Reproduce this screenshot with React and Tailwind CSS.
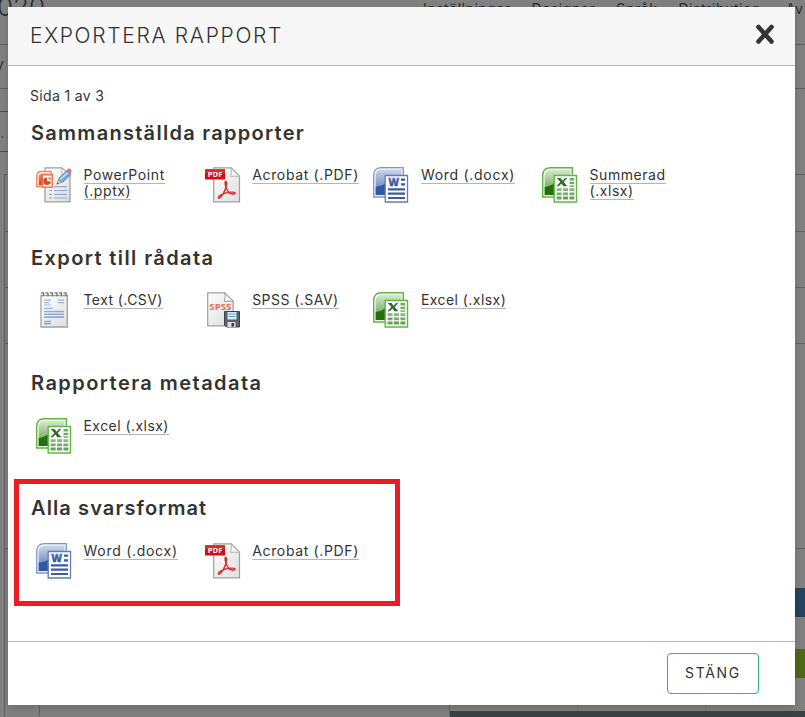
const PowerPointIcon = () => (
  <svg width="36" height="36" viewBox="0 0 36 36">
    <defs>
      <linearGradient id="ppt-page" x1="0" y1="0" x2="1" y2="1">
        <stop offset="0" stopColor="#ffffff" />
        <stop offset="1" stopColor="#dcdcdc" />
      </linearGradient>
      <linearGradient id="ppt-box" x1="0" y1="0" x2="0" y2="1">
        <stop offset="0" stopColor="#f58a68" />
        <stop offset="1" stopColor="#dd3c14" />
      </linearGradient>
    </defs>
    <path d="M9 .8h17l8 8V34.800H9z" fill="url(#ppt-page)" stroke="#a0a0a0" strokeWidth="1.300" />
    <path d="M26 1v8h8z" fill="#f4f4f4" stroke="#aaa" strokeWidth=".8" />
    <path d="M13 23.500h3M18 23.500h13M13 27.300h3M18 27.300h13M13 31h3M18 31h13M18 19.600h13" stroke="#93a5d0" strokeWidth="1.200" />
    <path d="M.8 19.500V9q0-4.500 4.500-4.500H15v15z" fill="#fff" stroke="#f48562" strokeWidth="1.500" />
    <path d="M2.700 18V10q0-3.500 3.500-3.500H13V18z" fill="url(#ppt-box)" />
    <path d="M6.500 7.800H16.300v12.400H6.500z" fill="#fff" stroke="#f0754f" strokeWidth="1.500" />
    <path d="M11 10.500a3.800 3.800 0 1 0 3.800 3.800H11z" fill="#dc4a20" />
    <path d="M12.500 9.700a3.500 3.500 0 0 1 3 3h-3z" fill="#ed7956" />
    <path d="M21 17l2-6 8-7.500 4 4-8 7.500z" fill="#78abd4" stroke="#5f88ae" strokeWidth=".8" />
    <path d="M24.500 12.200l7.500-7" stroke="#c5e3f6" strokeWidth="1.500" />
    <path d="M30.500 4l1.500-1.700q1.500-1 2.600.2t.3 2.900L34 7z" fill="#e8718b" stroke="#a9627e" strokeWidth=".6" />
    <path d="M21 17l1.400-4 3 2.800z" fill="#d3c09b" />
    <path d="M20.600 17.500l.8-2 1.400 1.300z" fill="#444" />
  </svg>
);

const PdfIcon = () => (
  <svg width="36" height="36" viewBox="0 0 36 36">
    <defs>
      <linearGradient id="pdf-page" x1="0" y1="0" x2="1" y2="1">
        <stop offset="0" stopColor="#ffffff" />
        <stop offset="1" stopColor="#dedede" />
      </linearGradient>
    </defs>
    <path d="M8.700 .8h17.500l8.300 8.500v25.500H8.700z" fill="url(#pdf-page)" stroke="#9e9e9e" strokeWidth="1.200" />
    <path d="M26 1q1 4-.5 8.500 5-1 9 0z" fill="#fafafa" stroke="#a8a8a8" strokeWidth=".9" />
    <path d="M0 2.300h20v10.200H0z" fill="#d40d12" />
    <path d="M0 2.300h20v4H0z" fill="#dc2a2b" />
    <text x="10.100" y="10.200" textAnchor="middle" fontFamily="Open Sans, sans-serif" fontWeight="700" fontSize="7.600" fill="#fff">PDF</text>
    <path
      d="M20.600 14.200c-.9 1-.3 4 .5 6.300 1 3 3.200 5.800 5.300 6.300 1.700.5 3.800.2 3.700-.8-.2-1.200-5-1-8-.4-3.600.8-8.300 3.200-8.800 4.800-.2 1 1.200.9 2.300-.2 2-2 3.900-5.400 4.900-8.400.9-2.800 1.200-6.900.1-7.600z"
      fill="none"
      stroke="#d8282c"
      strokeWidth="1.400"
      strokeLinejoin="round"
    />
  </svg>
);

const WordIcon = () => (
  <svg width="36" height="36" viewBox="0 0 36 36">
    <defs>
      <linearGradient id="word-back" x1="0" y1="0" x2="0" y2="1">
        <stop offset="0" stopColor="#cbd4e9" />
        <stop offset=".6" stopColor="#8299cc" />
        <stop offset="1" stopColor="#5a78b8" />
      </linearGradient>
      <linearGradient id="word-ink" x1="0" y1="0" x2="0" y2="1">
        <stop offset="0" stopColor="#6582be" />
        <stop offset="1" stopColor="#173f8d" />
      </linearGradient>
    </defs>
    <path d="M.7 30V8.500Q.7.700 8.500.700H30.300V30z" fill="#eef2fa" stroke="#7f98ca" strokeWidth="1.300" />
    <path d="M2.700 28V9Q2.700 2.700 9 2.700H28.300V28z" fill="url(#word-back)" />
    <path d="M2.700 19.500C8 19.500 12 17 16 14V28H2.700z" fill="#3058a4" />
    <path d="M12.200 8.500H34.500V35H12.200z" fill="#fff" stroke="#5f7dbb" strokeWidth="1.300" />
    <text x="20.600" y="19.200" textAnchor="middle" fontFamily="Open Sans, sans-serif" fontWeight="800" fontSize="10.500" fill="url(#word-ink)" stroke="#4766a9" strokeWidth=".4">W</text>
    <path d="M28 12.600h4M28 17.300h4" stroke="#355aa4" strokeWidth="2.200" />
    <path d="M15 22.300h17M15 26.600h17M15 31h17" stroke="#3a5ba2" strokeWidth="2.200" />
  </svg>
);

const ExcelIcon = () => (
  <svg width="36" height="36" viewBox="0 0 36 36">
    <defs>
      <linearGradient id="excel-back" x1="0" y1="0" x2="0" y2="1">
        <stop offset="0" stopColor="#d7e8cf" />
        <stop offset=".6" stopColor="#8cb878" />
        <stop offset="1" stopColor="#5b9d3f" />
      </linearGradient>
    </defs>
    <path d="M.7 30V8.500Q.7.700 8.500.700H30.300V30z" fill="#f2faee" stroke="#62b446" strokeWidth="1.400" />
    <path d="M2.700 28V9Q2.700 2.700 9 2.700H28.300V28z" fill="url(#excel-back)" />
    <path d="M2.700 20C8 19.500 12 17 16 13V28H2.700z" fill="#24700c" />
    <path d="M12.200 8.500H34.500V35H12.200z" fill="#fff" stroke="#62b645" strokeWidth="1.400" />
    <path d="M14.700 11h3.800l2.100 2.800 2.500-2.800h2.200l-3.600 4 3.700 4.300h-4l-2-2.900-2.700 2.900h-2.300l4-4.300z" fill="#32682d" />
    <path d="M27.500 11h4.700v2.400h-4.700zM27.500 14.700h4.700v2.300h-4.700zM27.500 18.200h4.700v1.500h-4.700z" fill="#6eae59" />
    <path d="M14.600 21.200h5v2.800h-5zM21 21.200h5v2.800h-5zM27.400 21.200h5v2.800h-5z" fill="#84b976" />
    <path d="M14.600 25.400h5v2.800h-5zM21 25.400h5v2.800h-5zM27.400 25.400h5v2.800h-5z" fill="#73ac65" />
    <path d="M14.600 29.600h5v2.800h-5zM21 29.600h5v2.800h-5zM27.400 29.600h5v2.800h-5z" fill="#61a44e" />
  </svg>
);

const CsvIcon = () => (
  <svg width="36" height="36" viewBox="0 0 36 36">
    <defs>
      <linearGradient id="csv-page" x1="0" y1="0" x2="1" y2="1">
        <stop offset="0" stopColor="#fff" />
        <stop offset="1" stopColor="#dfdfdf" />
      </linearGradient>
    </defs>
    <path d="M5 3.500h26.300v31.500H5z" fill="url(#csv-page)" stroke="#a3a3a3" strokeWidth="1.300" />
    <path d="M5 .8h2.500v3.400M9.500 .8h2.500v3.400M14 .8h2.500v3.400M18.500 .8h2.500v3.400M23 .8h2.500v3.400M27.500 .8h2.500v3.400" fill="none" stroke="#66707e" strokeWidth="1.200" />
    <path d="M8 8.200h7M22 8.200h6M8 10.700h5M22 10.700h6M8 13h7M8 16.400h9" stroke="#9cb4df" strokeWidth="1.200" />
    <path d="M8 19.500h20M8 22.300h20M8 25.100h20" stroke="#8eaadd" strokeWidth="1.600" />
    <path d="M8 29.500h7M8 31.800h7" stroke="#8ca9dc" strokeWidth="1.400" />
  </svg>
);

const SpssIcon = () => (
  <svg width="36" height="36" viewBox="0 0 36 36">
    <defs>
      <linearGradient id="spss-page" x1="0" y1="0" x2="1" y2="1">
        <stop offset="0" stopColor="#fff" />
        <stop offset="1" stopColor="#dadada" />
      </linearGradient>
    </defs>
    <path d="M2.700 .8h17l8.500 8.500v24.500H2.700z" fill="url(#spss-page)" stroke="#9e9e9e" strokeWidth="1.200" />
    <path d="M19.700 1q1.200 4-.4 8.500 5-1 9 0z" fill="#f8f8f8" stroke="#999" strokeWidth=".9" />
    <text x="15.300" y="18.300" textAnchor="middle" fontFamily="Open Sans, sans-serif" fontWeight="700" fontSize="9.600" fill="#ec6a50">SPSS</text>
    <path d="M19.500 19.500H34.500V35H21.500l-2-2z" fill="#596068" stroke="#3e444a" strokeWidth="1" />
    <path d="M22.500 20h9v7.500h-9z" fill="#d7eef8" />
    <path d="M23.500 22h7M23.500 24.500h7" stroke="#5f9fc1" strokeWidth="1.100" />
    <path d="M22.500 30h8v5h-8z" fill="#dcdcdc" />
    <path d="M26.500 31h2.500v3.500h-2.500z" fill="#33383d" />
  </svg>
);

const sections = [
  {
    title: 'Sammanställda rapporter',
    tracking: 'tracking-[1.280px]',
    links: [
      { icon: PowerPointIcon, label: 'PowerPoint (.pptx)', tracking: 'tracking-[0.600px]' },
      { icon: PdfIcon, label: 'Acrobat (.PDF)', tracking: 'tracking-[0.650px]' },
      { icon: WordIcon, label: 'Word (.docx)', tracking: 'tracking-[0.720px]' },
      { icon: ExcelIcon, label: 'Summerad (.xlsx)', tracking: 'tracking-[0.550px]' },
    ],
  },
  {
    title: 'Export till rådata',
    tracking: 'tracking-[1.400px]',
    links: [
      { icon: CsvIcon, label: 'Text (.CSV)', tracking: 'tracking-[0.420px]' },
      { icon: SpssIcon, label: 'SPSS (.SAV)', tracking: 'tracking-[0.450px]' },
      { icon: ExcelIcon, label: 'Excel (.xlsx)', tracking: 'tracking-[0.450px]' },
    ],
  },
  {
    title: 'Rapportera metadata',
    tracking: 'tracking-[1.450px]',
    links: [{ icon: ExcelIcon, label: 'Excel (.xlsx)', tracking: 'tracking-[0.450px]' }],
  },
  {
    title: 'Alla svarsformat',
    tracking: 'tracking-[1.100px]',
    links: [
      { icon: WordIcon, label: 'Word (.docx)', tracking: 'tracking-[0.720px]' },
      { icon: PdfIcon, label: 'Acrobat (.PDF)', tracking: 'tracking-[0.650px]' },
    ],
  },
];

const ExportLink = ({ icon: Icon, label, tracking }) => (
  <div className="flex w-[168.700px]">
    <div className="w-[52.500px] shrink-0 pl-[5px]">
      <Icon />
    </div>
    <div className="w-[112px] pr-1 text-[14px] leading-4">
      <a href="#" className={`border-b border-[#b5b5b5] ${tracking}`}>
        {label}
      </a>
    </div>
  </div>
);

const Section = ({ title, tracking, links }) => (
  <section className="h-[125.200px]">
    <h2 className={`h-[46.600px] text-[20px] leading-6 font-semibold whitespace-nowrap ${tracking}`}>{title}</h2>
    <div className="flex">
      {links.map((link) => (
        <ExportLink key={link.label} {...link} />
      ))}
    </div>
  </section>
);

/* The dimmed page behind the dialog */
const Backdrop = () => (
  <div className="h-[717px] overflow-hidden bg-[#808080] text-[#2b2d30]">
    <div className="flex h-[45px] justify-between border-b border-[#5e5e5e]">
      <span className="-mt-[9px] -ml-[3px] text-[26px] leading-8 font-light">020</span>
      <nav className="flex w-[382px] gap-[21px] pt-px text-[14px] leading-4 tracking-[0.550px] whitespace-nowrap">
        <span>Inställningar</span>
        <span>Designer</span>
        <span>Språk</span>
        <span>Distribution</span>
        <span className="ml-1">Av</span>
      </nav>
    </div>
    <div className="h-11 border-b border-[#5e5e5e] pt-1.5">
      <span className="-ml-1 text-[14px]">y</span>
    </div>
    <div className="mt-[22px] h-[41px] w-10 border-y border-[#1b6840] pt-2">
      <span className="text-[14px] text-[#234f80]">.</span>
    </div>
    <div className="mt-[22px] ml-1 h-[543px] border-l border-[#636363]">
      <div className="h-[58px] border-y border-[#636363]" />
      <div className="h-14 border-b border-[#636363]" />
      <div className="h-14 border-b border-[#636363]" />
      <div className="h-[205px] border-b border-[#636363]" />
      <div className="mt-[39px] ml-auto h-[29px] w-5 bg-[#25425e]" />
      <div className="mt-8 ml-auto h-[29px] w-5 bg-[#4c6818]" />
      <div className="mt-[26px] flex h-3">
        <div className="w-[35px] border-r border-[#636363]" />
        <div className="w-[409px]" />
        <div className="grow border-l border-[#636363]">
          <div className="flex h-[7px]">
            <div className="w-32 border-r border-[#757575]" />
            <div className="w-32 border-r border-[#757575]" />
          </div>
          <div className="h-[6px] bg-[#384247]" />
        </div>
      </div>
    </div>
  </div>
);

const ExportDialog = () => (
  <div
    role="dialog"
    className="absolute top-[7px] left-2 flex h-[698px] w-[787px] flex-col bg-white text-[#333] shadow-[0_3px_7px_rgba(0,0,0,0.15)]"
  >
    <header className="flex h-[59px] items-center justify-between border-b border-[#b5b5b5] bg-[#f7f7f7] pr-5 pl-[22px]">
      <h1 className="text-[21px] font-light tracking-[1.680px]">EXPORTERA RAPPORT</h1>
      <button aria-label="Stäng" className="mt-[-4px]">
        <svg width="20" height="20" viewBox="0 0 20 20">
          <path d="M3.500 3l13 14.500M16.500 3l-13 14.500" stroke="#333539" strokeWidth="4.600" strokeLinecap="round" />
        </svg>
      </button>
    </header>

    <main className="grow pt-5 pl-[23px]">
      <p className="-ml-px mb-[15.600px] text-[14px] leading-[19px] tracking-[0.350px]">Sida 1 av 3</p>
      {sections.map((section) => (
        <Section key={section.title} {...section} />
      ))}
    </main>

    <footer className="flex h-16 justify-end border-t border-[#b5b5b5] pt-[11px] pr-9">
      <button className="h-[41px] w-[92px] rounded border border-[#35b777] pb-0.5 text-[14px] tracking-[1.700px]">
        STÄNG
      </button>
    </footer>

    {/* Highlight around the last section */}
    <div className="pointer-events-none absolute top-[472px] left-1.5 h-[127px] w-[386px] border-[5px] border-[#ed1c24]" />
  </div>
);

const App = () => (
  <div className="relative h-[717px] w-[805px] overflow-hidden font-['Inter',sans-serif]">
    <Backdrop />
    <ExportDialog />
  </div>
);

export default App;
